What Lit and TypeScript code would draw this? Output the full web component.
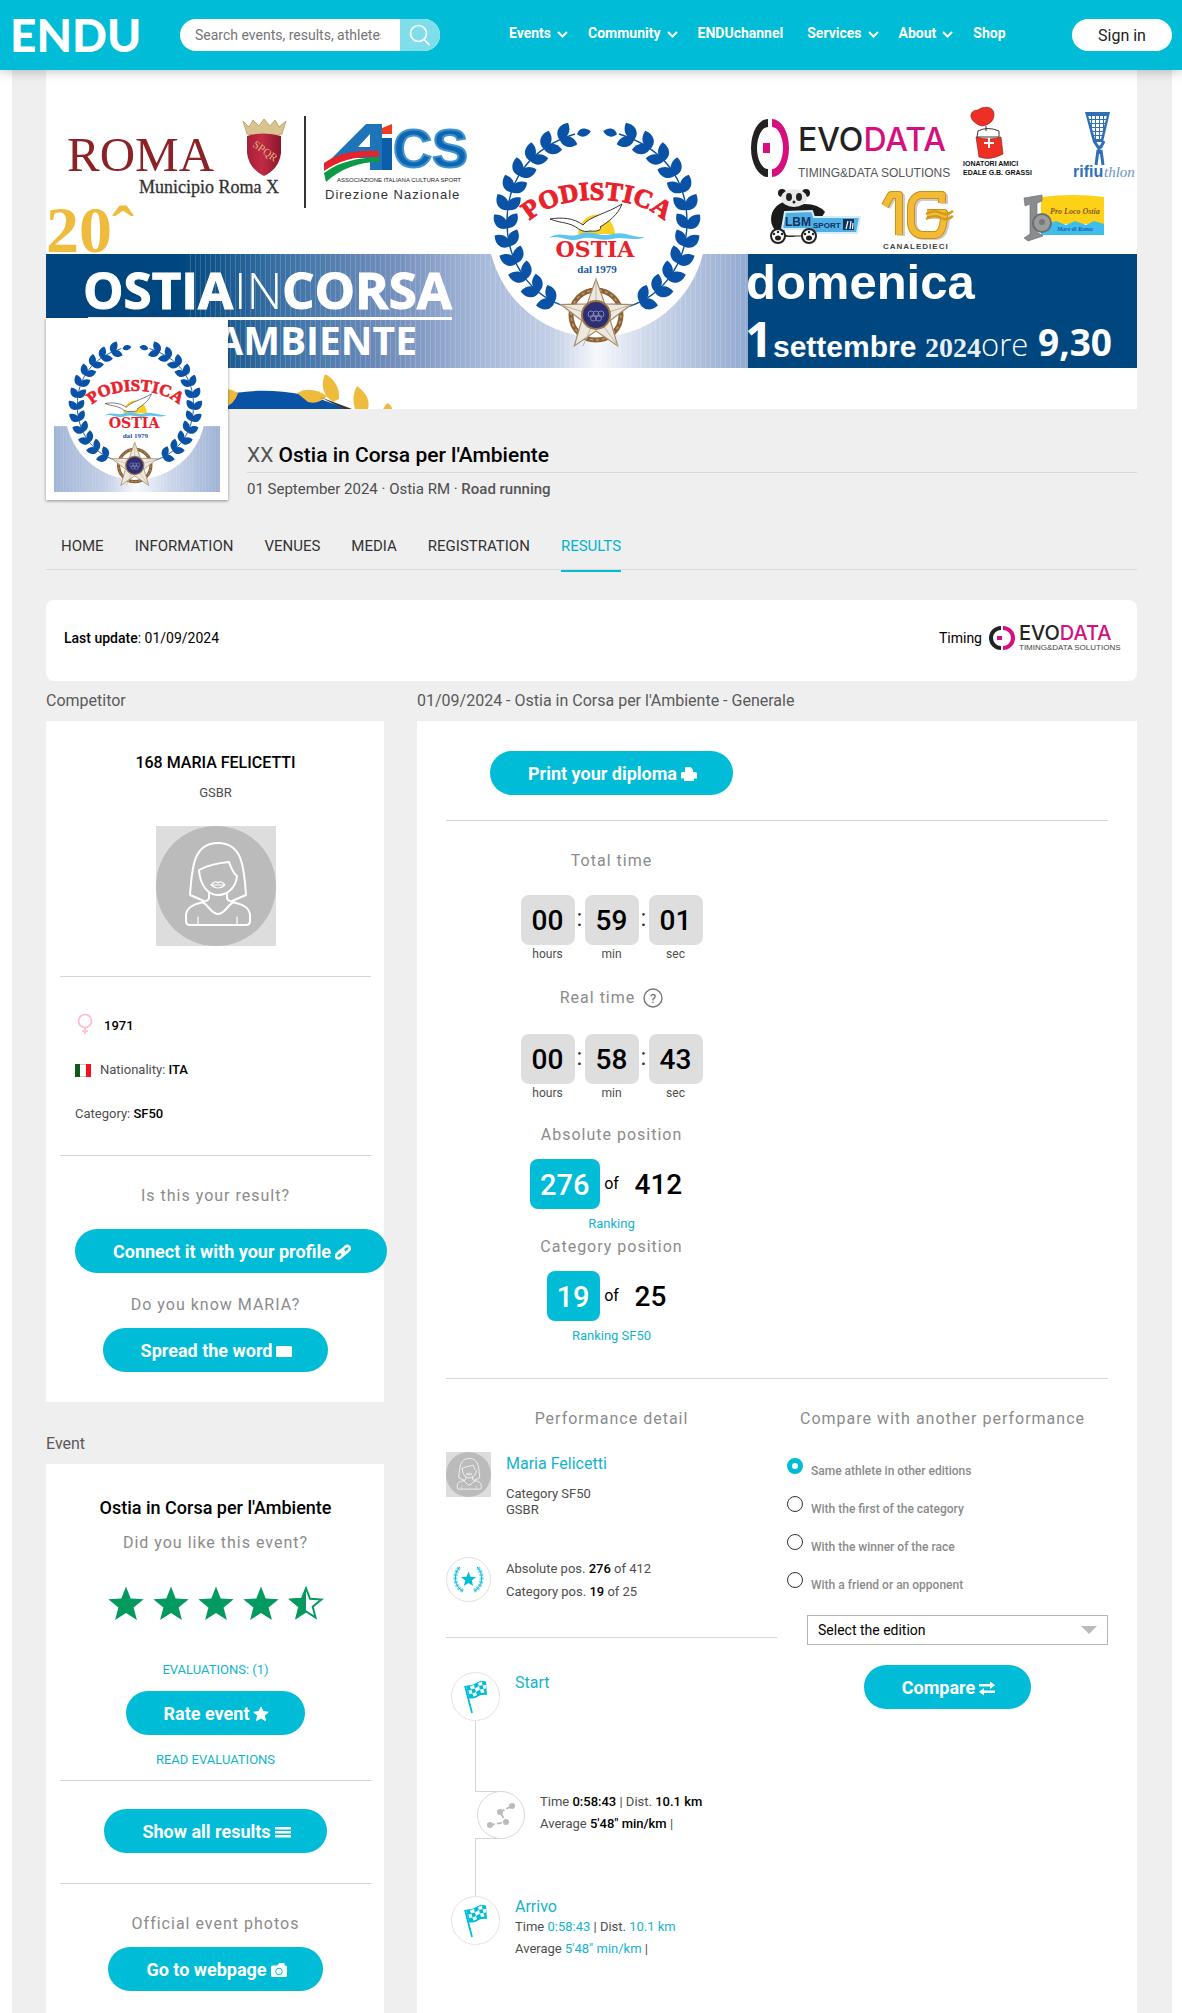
import { LitElement, html, svg, css } from "lit";
import { customElement, state } from "lit/decorators.js";

const leaf = (x: number, y: number, angle: number, len: number) => svg`
  <path transform="translate(${x.toFixed(1)} ${y.toFixed(1)}) rotate(${angle.toFixed(1)})"
    d="M0 0C${len * 0.2} ${-len * 0.42} ${len * 0.7} ${-len * 0.42} ${len} 0C${len * 0.7} ${len * 0.36} ${len * 0.25} ${len * 0.36} 0 0Z"/>`;

/* One branch of the laurel, climbing along a circle from the foot to the tip. */
const branch = (cx: number, cy: number, r: number) => {
  const parts = [];
  for (let i = 0; i < 12; i++) {
    const a = 118 + i * 11.6;
    const rad = (a * Math.PI) / 180;
    const x = cx + r * Math.cos(rad);
    const y = cy + r * Math.sin(rad);
    parts.push(leaf(x, y, a + 90 - 40, 19));
    parts.push(leaf(x, y, a + 90 + 38, 18));
  }
  const end = ((118 + 12 * 11.6) * Math.PI) / 180;
  parts.push(leaf(cx + r * Math.cos(end), cy + r * Math.sin(end), 348, 14));
  return parts;
};

const starPath = (cx: number, cy: number, outer: number, inner: number) => {
  let d = "";
  for (let i = 0; i < 10; i++) {
    const r = i % 2 ? inner : outer;
    const a = (-90 + i * 36) * (Math.PI / 180);
    d += `${i ? "L" : "M"}${(cx + r * Math.cos(a)).toFixed(1)} ${(cy + r * Math.sin(a)).toFixed(1)}`;
  }
  return d + "Z";
};

const emblem = (id: string) => svg`
  <circle cx="597" cy="228" r="109" fill="#fff"/>
  <g fill="#0a52a5">
    ${branch(597, 222, 90)}
    <g transform="translate(1194 0) scale(-1 1)">${branch(597, 222, 90)}</g>
  </g>
  <path d="M575 134C530 148 507 180 507 222C507 262 530 296 567 307M619 134C664 148 687 180 687 222C687 262 664 296 627 307" fill="none" stroke="#0a52a5" stroke-width="1.4"/>
  <path id="${id}" d="M524 228C548 190 646 190 670 228" fill="none"/>
  <text class="t-podistica"><textPath href="#${id}" startOffset="50%" text-anchor="middle">PODISTICA</textPath></text>
  <path d="M578 234C580 210 612 206 615 234Z" fill="#fbd025"/>
  <path d="M549 238C560 230 568 239 580 234C592 229 600 238 612 234C624 231 634 238 645 237C634 242 622 236 612 239C600 242 592 235 580 239C568 243 560 234 549 238Z" fill="#5ec5ee"/>
  <path d="M550 219C562 217 574 218 583 225C590 216 606 214 622 204C618 215 608 222 600 227C602 229 599 232 590 231C582 233 578 228 574 226C566 222 560 223 550 219Z" fill="#fff" stroke="#222" stroke-width=".9"/>
  <text class="t-ostia" x="595" y="257" text-anchor="middle">OSTIA</text>
  <text class="t-dal" x="597" y="273" text-anchor="middle">dal 1979</text>
  <circle cx="596" cy="315" r="25" fill="none" stroke="#8c6239" stroke-width="5"/>
  <circle cx="596" cy="315" r="25" fill="none" stroke="#c29a63" stroke-width="1.5" stroke-dasharray="3 3"/>
  <path d="${starPath(596, 316, 37, 15)}" fill="#eee9e0" stroke="#a48a6a" stroke-width="1.2"/>
  <path d="M596 279V316L583 346M596 316L618 346M596 316L561 305M596 316L631 305" stroke="#c3b49d" stroke-width="1" fill="none"/>
  <circle cx="596" cy="315" r="14" fill="#2c2f74" stroke="#9b7440" stroke-width="2"/>
  <g fill="none" stroke="#8b8cbb" stroke-width=".9"><circle cx="591" cy="314" r="3"/><circle cx="596" cy="314" r="3"/><circle cx="601" cy="314" r="3"/><circle cx="593.500" cy="318" r="3"/><circle cx="598.500" cy="318" r="3"/></g>`;

const stripes = (id: string) => svg`
  <linearGradient id="${id}-g" gradientUnits="userSpaceOnUse" x1="46" y1="0" x2="748" y2="0">
    <stop offset="0" stop-color="#00457d"/><stop offset=".19" stop-color="#00477f"/>
    <stop offset=".34" stop-color="#3c72a6"/><stop offset=".5" stop-color="#7590bd"/>
    <stop offset=".62" stop-color="#a6b8d9"/><stop offset=".72" stop-color="#c3cfe6"/>
    <stop offset=".785" stop-color="#f6f8fc"/><stop offset=".86" stop-color="#cdd7ea"/>
    <stop offset="1" stop-color="#91a9cf"/>
  </linearGradient>
  <pattern id="${id}-p" width="5" height="10" patternUnits="userSpaceOnUse"><rect width="1" height="10" fill="#fff" opacity=".16"/></pattern>`;

const female = html`<svg class="avatar" viewBox="0 0 120 120" role="img" aria-label="Athlete">
  <rect width="120" height="120" fill="#ddd"/><circle cx="60" cy="60" r="60" fill="#bbb"/>
  <g fill="none" stroke="#fff" stroke-width="2" stroke-linejoin="round" stroke-linecap="round">
    <path d="M48 75L34 69C36 40 38 17 62 17C86 17 88 40 90 69L76 75"/>
    <path d="M43 44C52 39 62 37 73 36C75 42 77 47 81 50C80 60 73 69 62 69C51 69 44 58 43 44Z"/>
    <path d="M53 67V72C53 75 48 76 44 77C36 79 30 82 30 90V95Q30 99 34 99H90Q94 99 94 95V90C94 82 88 79 80 77C76 76 71 75 71 72V67"/>
    <path d="M46 76C52 78 55 88 62 88C69 88 72 78 78 76"/>
    <path d="M42 91V98M81 91V98M55 59Q59 54 62 57Q65 54 69 59Q62 65 55 59ZM55 59H69" stroke-width="1.2"/>
  </g></svg>`;

const chevron = html`<svg class="chev" viewBox="0 0 11 7" aria-hidden="true"><path d="M1 1L5.500 5.500L10 1" fill="none" stroke="#fff" stroke-width="2"/></svg>`;

const icons = {
  printer: svg`<path d="M5 1H9.500L12 3.500V6H14.500Q16 6 16 7.500V12.500H13V15H3V12.500H0V7.500Q0 6 1.500 6H4V2Q4 1 5 1Z"/>`,
  link: svg`<g fill="none" stroke="#fff" stroke-width="2.600"><rect x="6" y="3.200" width="9.500" height="5" rx="2.500" transform="rotate(-42 11 6)"/><rect x=".5" y="8" width="9.500" height="5" rx="2.500" transform="rotate(-42 5 10.500)"/></g>`,
  mail: svg`<rect x="0" y="3" width="16" height="11" rx="1.500"/>`,
  star: svg`<path d="${starPath(8, 8.5, 7.6, 3.6)}" stroke="#fff" stroke-linejoin="round"/>`,
  menu: svg`<path d="M0 3H16V5.500H0ZM0 7H16V9.500H0ZM0 11H16V13.500H0Z"/>`,
  camera: svg`<path d="M1.500 3.500H6L8.500 1H13.500V3.500H14.500Q16 3.500 16 5V13.500Q16 15 14.500 15H1.500Q0 15 0 13.500V5Q0 3.500 1.500 3.500Z"/><circle cx="8" cy="9.500" r="3.300" fill="none" stroke="#00bcd7" stroke-width="1"/>`,
  swap: svg`<path d="M0 4H11V1.500L16 5.200L11 9V6.500H0ZM16 10.500H5V8L0 11.700L5 15.500V13H16Z"/>`,
};

const pill = (label: string, icon: keyof typeof icons) => html`<button class="pill" type="button">${label}<svg viewBox="0 0 16 16" aria-hidden="true" fill="#fff">${icons[icon]}</svg></button>`;

const flag = html`<svg viewBox="0 0 49 49" aria-hidden="true">
  <circle cx="24.500" cy="24.500" r="24" fill="#fff" stroke="#e2e2e2"/>
  <path d="M14 14L21 41" stroke="#00bcd7" stroke-width="1.800"/>
  <path d="M15 13.500Q21 14 25 11Q30 8 35 9.500L36 23Q30 22 26 25Q23 27 18 26.500Z" fill="#00bcd7"/>
  <path d="M19 14.500L23 13L24 16.500L20 17.500ZM27 11L31 10L31.500 13L28 14ZM24 16.500L28 14L29 17.500L25 20ZM31.500 13.500L35 13V16.500L32.500 17ZM20.500 18L17.500 18.500L18.500 22L21.500 21.500ZM21.500 21.500L25 20L26 23L22.500 24.800ZM29 17.500L32.500 17L33.500 20.500L30 21Z" fill="#fff"/>
</svg>`;

const laurel = html`<svg class="medal" viewBox="0 0 45 45" aria-hidden="true">
  <circle cx="22.500" cy="22.500" r="22" fill="#fff" stroke="#e0e0e0"/>
  <g fill="none" stroke="#7edbe9" stroke-width="4" stroke-dasharray="2.500 1"><path d="M17 34C8 30 7 16 14 10"/><path d="M28 34C37 30 38 16 31 10"/></g>
  <path d="M17 34C8 30 7 16 14 10M28 34C37 30 38 16 31 10" fill="none" stroke="#00bcd7" stroke-width="1"/>
  <path d="${starPath(22.5, 22.5, 8, 3.4)}" fill="#00bcd7"/>
</svg>`;

const trackIcon = html`<svg viewBox="0 0 48 48" aria-hidden="true">
  <circle cx="24" cy="24" r="23.500" fill="#fff" stroke="#dadada"/>
  <path d="M13 34L29 31L23 21L35 15" fill="none" stroke="#bbb" stroke-width="1.800" stroke-dasharray="5 2"/>
  <g fill="#bbb"><circle cx="13" cy="34" r="3"/><circle cx="29" cy="31" r="3"/><circle cx="23" cy="21" r="3"/><circle cx="35" cy="15" r="3"/></g>
</svg>`;

const scoreStar = (half: boolean) => html`<svg viewBox="0 0 36 34" aria-hidden="true">${
  half
    ? svg`<path d="${starPath(18, 18.5, 16.2, 7)}" fill="#fff" stroke="#039a5f" stroke-width="2"/><path d="M18 1V26L8 33L11 21L1 13L13.500 12Z" fill="#039a5f"/>`
    : svg`<path d="${starPath(18, 19, 18.6, 8)}" fill="#039a5f"/>`
}</svg>`;

const banner = html`<svg class="banner" viewBox="46 70 1091 339" role="img" aria-label="Ostia in Corsa per l'Ambiente">
  <defs>${stripes("bn")}
    <linearGradient id="shield" x1="0" x2="1"><stop offset="0" stop-color="#a81f38"/><stop offset=".45" stop-color="#c22a45"/><stop offset="1" stop-color="#8a1629"/></linearGradient>
    <pattern id="mesh" width="4" height="4" patternUnits="userSpaceOnUse"><rect width="3" height="3" fill="#fff"/></pattern>
  </defs>
  <rect x="46" y="70" width="1091" height="339" fill="#fff"/>
  <text x="67" y="171" class="serif" font-size="49" fill="#8c2226">ROMA</text>
  <text x="139" y="193" class="serif" font-size="18" fill="#333" stroke="#333" stroke-width=".3">Municipio Roma X</text>
  <path d="M243 121L249 127L253 120L259 126L264 119L270 126L275 120L279 127L286 121L282 134Q264 139 247 134Z" fill="#d9c48f" stroke="#b39a5d" stroke-width=".8"/>
  <path d="M247 136Q264 131 281 136V153Q279 169 264 176Q249 169 247 153Z" fill="url(#shield)"/>
  <text x="252" y="146" class="serif" font-size="11" fill="#e0b07f" transform="rotate(36 252 146)">SPQR</text>
  <rect x="304" y="116" width="2" height="92" fill="#333"/>
  <path d="M328 162L366 124H382V170H370V158H346Z" fill="#1f74b8"/>
  <path d="M358 147L370 134V147Z" fill="#fff"/>
  <text x="393" y="167" class="sans" font-weight="700" font-size="54" fill="#0f66b0" stroke="#3f93d2" stroke-width="2">CS</text>
  <path d="M382 138H392V170H382Z" fill="#0b5fa8"/><path d="M382 128L392 124V134H382Z" fill="#ee3b24"/>
  <path d="M324 163C340 152 358 150 379 151V157C358 156 340 160 324 171Z" fill="#e5232b"/>
  <path d="M324 173C340 161 358 158 379 157V162C358 162 340 169 326 182Z" fill="#0d9a47"/>
  <text x="337" y="182" class="sans" font-size="6" fill="#222">ASSOCIAZIONE ITALIANA CULTURA SPORT</text>
  <text x="325" y="199" class="sans" font-size="13" fill="#333" letter-spacing="1">Direzione Nazionale</text>
  <text x="46" y="252" class="serif" font-weight="700" font-size="66" fill="#efbb3d">20ˆ</text>

  <rect x="46" y="254" width="702" height="114" fill="url(#bn-g)"/>
  <rect x="190" y="254" width="558" height="114" fill="url(#bn-p)"/>
  <rect x="748" y="254" width="389" height="114" fill="#00477f"/>
  <text x="83" y="309" class="open" font-weight="700" font-size="51" fill="#fff" stroke="#fff">OSTIA</text>
  <text x="234" y="309" class="open" font-weight="300" font-size="50" fill="#fff">IN</text>
  <text x="282" y="309" class="open" font-weight="700" font-size="51" fill="#fff" stroke="#fff">CORSA</text>
  <rect x="88" y="317" width="364" height="3" fill="#fff"/>
  <text x="417" y="355" text-anchor="end" class="open" font-weight="700" font-size="39" fill="#fff">AMBIENTE</text>
  <path d="M220 409V396C250 388 300 387 345 409Z" fill="#0a52a5"/>
  <g fill="#efbb3d"><path d="M210 396Q225 384 238 393Q235 404 222 409Z"/><path d="M297 393Q310 385 327 396Q318 405 308 402Z"/><path d="M325 374Q340 382 339 399L333 402Q318 392 325 374Z"/><path d="M357 386Q371 396 368 409H355Q351 396 357 386Z"/><path d="M387 403Q392 405 392 409H383Z"/></g>
  <path d="M320 397L352 409H344Z" fill="#333"/>
  ${emblem("arc-banner")}

  <path d="M768 119A17 29 0 0 0 768 177V169A11 21 0 0 1 768 127Z" fill="#222"/>
  <path d="M772 119A17 29 0 0 1 772 177V169A11 21 0 0 0 772 127Z" fill="#d5107e"/>
  <rect x="763" y="143" width="7" height="10" fill="#d5107e"/>
  <text x="798" y="151" class="inter" font-size="32" fill="#222">EVO<tspan fill="#d5107e">DATA</tspan></text>
  <text x="798" y="177" class="sans" font-size="12" fill="#555">TIMING&amp;DATA SOLUTIONS</text>

  <path d="M982 126C968 122 968 110 978 110C981 107 994 104 994 115C994 120 990 125 982 126Z" fill="#ee2f24" stroke="#7d1410" stroke-width=".6"/>
  <path d="M986 126V131M978 131Q988 126 999 131V137H977Z" fill="#fff" stroke="#222" stroke-width=".9"/>
  <path d="M976 137Q989 141 1001 137L1003 154Q990 161 979 157Z" fill="#ee2f24" stroke="#7d1410" stroke-width=".6"/>
  <path d="M989 138V148M984 143H994" stroke="#fff" stroke-width="2"/>
  <text x="963" y="166" class="sans" font-weight="700" font-size="7" fill="#111">IONATORI AMICI</text>
  <text x="963" y="175" class="sans" font-weight="700" font-size="7" fill="#111">EDALE G.B. GRASSI</text>
  <path d="M1085 112H1110L1103 142H1093Z" fill="#2f6fb7"/><path d="M1088 115H1107L1101 139H1095Z" fill="url(#mesh)"/>
  <path d="M1094 141L1098 147H1101L1104 141M1099 146V154M1098 150L1096 165M1101 150L1103 165" stroke="#2f6fb7" stroke-width="3" fill="none"/>
  <text x="1073" y="177" class="sans" font-weight="700" font-size="16" fill="#2f6fb7">rifiu</text>
  <text x="1104" y="177" class="serif" font-style="italic" font-size="15" fill="#6a93c8">thlon</text>

  <ellipse cx="790" cy="219" rx="19" ry="18" fill="#1b1b1b"/><path d="M790 206Q815 200 825 212L820 220H795Z" fill="#1b1b1b"/>
  <circle cx="782" cy="193" r="4" fill="#1b1b1b"/><circle cx="806" cy="193" r="4" fill="#1b1b1b"/>
  <ellipse cx="794" cy="198" rx="13" ry="9" fill="#e9e9e9"/><ellipse cx="789" cy="197" rx="3" ry="4" fill="#222"/><ellipse cx="799" cy="197" rx="3" ry="4" fill="#222"/><circle cx="794" cy="202" r="1.500" fill="#222"/>
  <rect x="784" y="226" width="30" height="10" rx="4" fill="#fff" stroke="#222"/>
  <path d="M785 212L812 211L814 217H860L857 233H812L810 229H782Z" fill="#4fb0e6" stroke="#d6ecf8" stroke-width="2"/>
  <text x="785" y="226" class="sans" font-weight="700" font-size="12" fill="#12305c">LBM</text>
  <text x="813" y="228" class="sans" font-weight="700" font-size="8" fill="#12305c">SPORT</text><rect x="843" y="219" width="11" height="11" fill="#12305c"/><path d="M846 229L848 221M850 229L851 221M852.500 229L853 223" stroke="#fff" stroke-width="1.200"/>
  <g fill="#fff" stroke="#222" stroke-width="2"><circle cx="778" cy="236" r="7"/><circle cx="809" cy="236" r="7"/></g>
  <g fill="#222"><ellipse cx="778" cy="238" rx="3" ry="2.500"/><ellipse cx="809" cy="238" rx="3" ry="2.500"/><circle cx="774" cy="234" r="1.200"/><circle cx="778" cy="232" r="1.200"/><circle cx="782" cy="234" r="1.200"/><circle cx="805" cy="234" r="1.200"/><circle cx="809" cy="232" r="1.200"/><circle cx="813" cy="234" r="1.200"/></g>
  <g fill="none" stroke="#ccc" stroke-width="8" stroke-linejoin="round"><path d="M887 207L892 197H901V236"/><path d="M944 204V197H921Q913 200 913 210V225Q915 236 925 236H936Q946 236 946 215H929"/></g>
  <g fill="none" stroke="#c98f18" stroke-width="8" stroke-linejoin="round"><path d="M885 206L891 195H899V235"/><path d="M942 203V195H920Q911 198 911 208V224Q913 235 923 235H934Q944 235 944 213H927"/></g>
  <g fill="none" stroke="#f3bb33" stroke-width="6" stroke-linejoin="round"><path d="M885 206L891 195H899V235"/><path d="M942 203V195H920Q911 198 911 208V224Q913 235 923 235H934Q944 235 944 213H927"/></g>
  <path d="M926 214Q934 209 941 213Q947 216 953 211M926 219Q934 214 941 218Q947 221 953 216" stroke="#d69a1c" stroke-width="2.500" fill="none"/>
  <text x="883" y="249" class="sans" font-weight="700" font-size="8" fill="#444" letter-spacing="1">CANALEDIECI</text>
  <path d="M1041 197Q1075 193 1104 197V224H1041Z" fill="#fcd116"/><path d="M1041 226L1056 221L1066 225L1075 221L1086 225L1094 221L1104 224V235H1041Z" fill="#41bdec"/>
  <path d="M1024 198L1042 195V201L1037 203V232L1043 236L1028 241L1024 238L1030 234V204L1025 206Z" fill="#8a8d90" stroke="#666" stroke-width=".6"/>
  <circle cx="1042" cy="223" r="9" fill="#9a9c9e" stroke="#6b6d70" stroke-width="2"/><circle cx="1042" cy="222" r="3" fill="#777"/>
  <text x="1050" y="214" class="serif" font-style="italic" font-weight="700" font-size="8" fill="#8a5a2c">Pro Loco Ostia</text>
  <text x="1057" y="231" class="serif" font-style="italic" font-weight="700" font-size="6" fill="#1b5fa4">Mare di Roma</text>

  <text x="746" y="299" class="sans" font-weight="700" font-size="49" fill="#fff">domenica</text>
  <text x="745" y="357" class="open" font-weight="700" font-size="48" fill="#fff">1</text>
  <text x="773" y="357" class="sans" font-weight="700" font-size="30" fill="#fff">settembre</text>
  <text x="925" y="357" class="serif" font-weight="700" font-size="28" fill="#e7eef6">2024</text>
  <text x="981" y="356" class="open" font-weight="300" font-size="31" fill="#fff">ore</text>
  <text x="1038" y="356" class="open" font-weight="700" font-size="37" fill="#fff">9,30</text>
</svg>`;

const evodata = html`<svg class="evodata" viewBox="0 0 132 26" role="img" aria-label="Evodata">
  <path d="M12 1A12 12 0 0 0 12 25V21A8 8 0 0 1 12 5Z" fill="#222"/><path d="M14 1A12 12 0 0 1 14 25V21A8 8 0 0 0 14 5Z" fill="#d5107e"/><rect x="8" y="11" width="5" height="4" fill="#d5107e"/>
  <text x="30" y="15" class="inter" font-size="20" fill="#222">EVO<tspan fill="#d5107e">DATA</tspan></text>
  <text x="30" y="25" class="sans" font-size="8" fill="#444">TIMING&amp;DATA SOLUTIONS</text>
</svg>`;

@customElement("app-root")
export class AppRoot extends LitElement {
  @state() private mode = 0;

  private nav = [
    { label: "Events", menu: true },
    { label: "Community", menu: true },
    { label: "ENDUchannel", menu: false },
    { label: "Services", menu: true },
    { label: "About", menu: true },
    { label: "Shop", menu: false },
  ];
  private tabs = ["HOME", "INFORMATION", "VENUES", "MEDIA", "REGISTRATION", "RESULTS"];
  private modes = [
    "Same athlete in other editions",
    "With the first of the category",
    "With the winner of the race",
    "With a friend or an opponent",
  ];

  static styles = css`
    :host { display: block; background: #fff; color: #4d4d4d; font: 13px/20px Roboto, "Liberation Sans", sans-serif; }
    * { box-sizing: border-box; }
    h1, h2, h3, p, ul, dl, dd, fieldset { margin: 0; padding: 0; border: 0; list-style: none; font-weight: 400; }
    a { color: inherit; text-decoration: none; }
    b { font-weight: 500; color: #000; }
    button, input, select { font-family: inherit; }
    svg { display: block; }
    .serif { font-family: "Liberation Serif", serif; }
    .sans { font-family: "Liberation Sans", sans-serif; }
    .open { font-family: "Open Sans", sans-serif; }
    .inter { font-family: Inter, sans-serif; font-weight: 500; }
    .t-podistica { font: 700 26px "Liberation Serif", serif; fill: #e8212b; stroke: #e8212b; stroke-width: 1px; }
    .t-ostia { font: 700 22px "DejaVu Serif", serif; fill: #e8212b; }
    .t-dal { font: 700 11px "Liberation Serif", serif; fill: #1b56a5; }

    .top { position: relative; z-index: 1; display: flex; align-items: center; height: 70px; padding: 0 10px 0 10px; background: #00bcd7; box-shadow: 0 0 12px rgba(0, 0, 0, 0.3); }
    .logo { width: 126px; font: 900 46px/46px Lato, sans-serif; color: #fff; }
    .search { display: flex; width: 260px; height: 32px; margin-left: 44px; border-radius: 16px; overflow: hidden; background: #fff; }
    .search input { flex: 1; min-width: 0; padding: 0 19px 0 15px; border: 0; background: none; font-size: 14px; color: #333; outline: 0; }
    .search input::placeholder { color: #757575; opacity: 1; }
    .search button { width: 40px; padding: 0 0 0 9px; border: 0; background: #80deeb; }
    .search svg { width: 22px; }
    .nav { display: flex; gap: 20px; margin: 0 auto 0 69px; font: 700 14px/20px Roboto, sans-serif; color: #fff; padding-bottom: 4px; }
    .nav a { display: flex; align-items: center; gap: 6px; }
    .nav .plain { padding-right: 4px; }
    .chev { width: 11px; margin-top: 3px; }
    .signin { width: 100px; height: 32px; border: 0; border-radius: 16px; background: #fff; font-size: 16px; color: #222; }

    .page { margin: 0 10px 0 12px; padding: 0 35px 0 34px; background: #efefef; }
    .banner { width: 100%; height: auto; }
    .head { display: flex; gap: 19px; }
    .thumb { position: relative; flex: none; width: 182px; height: 182px; margin-top: -91px; padding: 8px; background: #fff; box-shadow: 0 1px 3px rgba(0, 0, 0, 0.4); }
    .thumb svg { width: 100%; height: 100%; }
    .title { flex: 1; padding-top: 34px; }
    .title h1 { padding-bottom: 5px; border-bottom: 1px solid #d8d8d8; font-size: 21px; font-weight: 500; line-height: 24px; color: #000; }
    .title h1 span { font-weight: 400; }
    .title h1 span, .title b { color: #555; }
    .title p { padding-top: 6px; font-size: 15px; line-height: 20px; }
    .tabs { display: flex; gap: 31px; margin-top: 31px; padding: 0 15px; border-bottom: 1px solid #dadada; font-size: 15px; line-height: 30px; color: #333; }
    .tabs a { padding-bottom: 9px; margin-bottom: -3px; border-bottom: 2px solid transparent; }
    .tabs .on { color: #00b4d0; border-color: #00bcd7; }
    .update { display: flex; justify-content: space-between; margin-top: 30px; height: 81px; padding: 24px 16px 24px 18px; border-radius: 8px; background: #fff; font-size: 14px; line-height: 28px; color: #000; }
    .timing { display: flex; gap: 7px; height: 28px; align-items: center; }
    .evodata { width: 132px; overflow: visible; }

    .cols { display: grid; grid-template-columns: minmax(0, 338fr) minmax(0, 720fr); column-gap: 33px; padding-top: 8px; }
    .col { display: flex; flex-direction: column; }
    .cap { margin-bottom: 8px; font-size: 16px; line-height: 24px; color: #5a5a5a; }
    .cap2 { margin-top: 30px; }
    .card { background: #fff; }
    .side { padding: 30px 13px 30px 14px; text-align: center; }
    .side.last { padding: 32px 13px 22px 14px; flex: 1; }
    .act { padding: 0 15px; text-align: center; white-space: nowrap; }
    .pill { display: inline-flex; align-items: center; gap: 4px; height: 44px; padding: 0 36px 0 38px; border: 0; border-radius: 22px; background: #00bcd7; color: #fff; font-size: 18px; font-weight: 700; vertical-align: top; white-space: nowrap; }
    .pill svg { flex: none; width: 16px; height: 16px; margin-top: 2px; }
    .line { height: 1px; border: 0; margin: 0; background: #d6d6d6; }
    .name { font-size: 16px; font-weight: 500; line-height: 24px; color: #000; }
    .ev { font-size: 18px; font-weight: 500; line-height: 24px; color: #000; }
    .club { margin: 8px 0 23px; }
    .avatar { width: 120px; }
    .side .avatar { margin: 0 auto 30px; }
    .facts { padding: 27px 15px 19px; text-align: left; }
    .facts li { display: flex; align-items: center; height: 44px; white-space: pre; }
    .facts .sex { width: 16px; margin: 0 11px 5px 2px; }
    .facts .ita { width: 16px; margin-right: 9px; }
    .q { font-size: 16px; line-height: 24px; letter-spacing: 1px; color: #8b8b8b; text-align: center; }
    .mt1 { margin-top: 1px; } .mt5 { margin-top: 5px; } .mt11 { margin-top: 11px; } .mt20 { margin-top: 20px; } .mt21 { margin-top: 21px; } .mt22 { margin-top: 22px; } .mt24 { margin-top: 24px; } .mt28 { margin-top: 28px; } .mt30 { margin-top: 30px; }
    .stars { display: flex; justify-content: center; gap: 9px; margin: 31px 0 40px; }
    .stars svg { width: 36px; }
    .blue { color: #12b3cd; }
    .read { margin: 15px 0 10px; }

    .main { flex: 1; padding: 30px 29px; }
    .half { width: 50%; text-align: center; }
    .print { margin-bottom: 25px; }
    .clock { display: flex; justify-content: center; text-align: center; font-size: 12px; line-height: 16px; }
    .unit { width: 54px; }
    .num { display: block; height: 50px; margin-bottom: 1px; border-radius: 8px; background: #dedede; color: #000; font-size: 28px; font-weight: 500; line-height: 52px; }
    .sep { width: 10px; text-align: center; font-size: 24px; line-height: 46px; color: #333; }
    .real { display: flex; justify-content: center; align-items: center; gap: 8px; }
    .real svg { width: 20px; }
    .rank { display: grid; grid-template-columns: 1fr 24px 1fr; align-items: center; height: 50px; margin-top: 12px; font-size: 16px; color: #000; }
    .rank b { justify-self: end; height: 50px; padding: 0 10px; border-radius: 8px; background: #00bcd7; color: #fff; font-size: 29px; line-height: 52px; }
    .rank span { justify-self: start; height: 50px; padding-left: 11px; font-size: 28px; font-weight: 500; line-height: 52px; }
    .mainline { margin-top: 32px; }
    .split { display: grid; grid-template-columns: 1fr 1fr; padding-top: 28px; }
    .row { display: flex; gap: 15px; }
    .ath { margin-top: 21px; }
    .ath .avatar, .medal { flex: none; width: 45px; height: 45px; }
    .ath h3 { padding: 2px 0 12px; font-size: 16px; line-height: 20px; }
    .ath p { line-height: 16px; }
    .pos { margin: 39px 0 34px; line-height: 23px; }
    .tl { padding: 34px 0 0 5px; }
    .tl h3 { font-size: 16px; line-height: 22px; }
    .stop { display: flex; align-items: flex-start; gap: 15px; line-height: 22px; }
    .stop svg { flex: none; width: 49px; height: 49px; }
    .rail { height: 70px; margin-left: 24px; border-left: 1px solid #d5d5d5; }
    .rail.low { height: 57px; }
    .leg { display: flex; margin-left: 24px; line-height: 22px; }
    .spur { width: 30px; height: 48px; margin-right: -28px; border: solid #d5d5d5; border-width: 1px 0; }
    .leg svg { width: 48px; margin-right: 15px; }
    .arr h3 { line-height: 20px; padding-top: 1px; }
    .arr p { line-height: 24px; }
    .arr p:first-of-type { line-height: 20px; }
    .opts { padding: 27px 0 0 10px; }
    .opt { display: flex; gap: 8px; height: 38px; }
    .opt input { appearance: none; width: 16px; height: 16px; margin: 0; border: 1px solid #333; border-radius: 50%; background: #fff; }
    .opt input:checked { border: 5px solid #00bcd7; }
    .opt label { padding-top: 5px; font-size: 12px; font-weight: 500; line-height: 16px; color: #8b8b8b; }
    .pick { position: relative; margin: 5px 0 20px 30px; }
    .pick select { width: 100%; height: 30px; padding: 0 10px; appearance: none; border: 1px solid #b5b5b5; border-radius: 0; background: #fff; font-size: 14px; color: #000; display: block; }
    .pick::after { content: ""; position: absolute; right: 11px; top: 11px; border: 8px solid transparent; border-top: 8px solid #bbb; border-bottom: 0; pointer-events: none; }
    .cmp { padding-left: 10px; text-align: center; }
  `;

  private clock(values: string[]) {
    const names = ["hours", "min", "sec"];
    return html`<div class="clock">${values.map(
      (v, i) => html`${i ? html`<span class="sep" aria-hidden="true">:</span>` : ""}<div class="unit"><span class="num">${v}</span>${names[i]}</div>`
    )}</div>`;
  }

  render() {
    return html`
      <header class="top">
        <a class="logo" href="#">ENDU</a>
        <form class="search" role="search">
          <input type="text" aria-label="Search" placeholder="Search events, results, athletes" />
          <button type="button" aria-label="Search"><svg viewBox="0 0 22 22" fill="none" stroke="#fff" stroke-width="1.700"><circle cx="9.500" cy="9.500" r="8"/><path d="M15 15.500L20.500 21"/></svg></button>
        </form>
        <nav class="nav">${this.nav.map((n) => html`<a href="#" class=${n.menu ? "menu" : "plain"}>${n.label}${n.menu ? chevron : ""}</a>`)}</nav>
        <button class="signin" type="button">Sign in</button>
      </header>
      <main class="page">
        ${banner}
        <div class="head">
          <div class="thumb"><svg viewBox="471 99 257 257" role="img" aria-label="Podistica Ostia">
            <defs>${stripes("th")}</defs>
            <rect x="471" y="254" width="257" height="102" fill="url(#th-g)"/><rect x="471" y="254" width="257" height="102" fill="url(#th-p)"/>
            ${emblem("arc-thumb")}</svg></div>
          <div class="title">
            <h1><span>XX</span> Ostia in Corsa per l'Ambiente</h1>
            <p>01 September 2024 · Ostia RM · <b>Road running</b></p>
          </div>
        </div>
        <nav class="tabs">${this.tabs.map((t) => html`<a href="#" class=${t === "RESULTS" ? "on" : ""}>${t}</a>`)}</nav>
        <section class="update">
          <p><b>Last update</b>: 01/09/2024</p>
          <div class="timing">Timing ${evodata}</div>
        </section>
        <div class="cols">
          <div class="col">
            <h2 class="cap">Competitor</h2>
            <section class="card side">
              <h3 class="name">168 MARIA FELICETTI</h3>
              <p class="club">GSBR</p>
              ${female}
              <hr class="line" />
              <ul class="facts">
                <li><svg class="sex" viewBox="0 0 16 22" fill="none" stroke="#ffb9c8" stroke-width="1.600" aria-label="Female"><circle cx="8" cy="8" r="6.500"/><path d="M8 14.500V21M5 18H11"/></svg><b>1971</b></li>
                <li><svg class="ita" viewBox="0 0 16 13" aria-hidden="true"><rect width="16" height="13" fill="#ccc"/><rect x="5" y="1" width="6" height="11" fill="#fff"/><rect y="0" width="5" height="13" fill="#0b5a1c"/><rect x="11" width="5" height="13" fill="#f5101c"/></svg>Nationality: <b>ITA</b></li>
                <li>Category: <b>SF50</b></li>
              </ul>
              <hr class="line" />
              <p class="q mt28">Is this your result?</p>
              <div class="act mt21">${pill("Connect it with your profile", "link")}</div>
              <p class="q mt20">Do you know MARIA?</p>
              <div class="act mt11">${pill("Spread the word", "mail")}</div>
            </section>
            <h2 class="cap cap2">Event</h2>
            <section class="card side last">
              <h3 class="ev">Ostia in Corsa per l'Ambiente</h3>
              <p class="q mt11">Did you like this event?</p>
              <div class="stars" role="img" aria-label="4.5 of 5">${[0, 1, 2, 3, 4].map((i) => scoreStar(i === 4))}</div>
              <a class="blue" href="#">EVALUATIONS: (1)</a>
              <div class="act mt11">${pill("Rate event", "star")}</div>
              <p class="read"><a class="blue" href="#">READ EVALUATIONS</a></p>
              <hr class="line" />
              <div class="act mt28">${pill("Show all results", "menu")}</div>
              <hr class="line mt30" />
              <p class="q mt28">Official event photos</p>
              <div class="act mt11">${pill("Go to webpage", "camera")}</div>
            </section>
          </div>
          <div class="col">
            <h2 class="cap">01/09/2024 - Ostia in Corsa per l'Ambiente - Generale</h2>
            <section class="card main">
              <div class="half print">${pill("Print your diploma", "printer")}</div>
              <hr class="line" />
              <div class="half">
                <h3 class="q mt28">Total time</h3>
                <div class="mt22">${this.clock(["00", "59", "01"])}</div>
                <h3 class="q real mt24">Real time
                  <svg viewBox="0 0 20 20" aria-label="Help"><circle cx="10" cy="10" r="9" fill="none" stroke="#777" stroke-width="1.400"/><text x="10" y="15" text-anchor="middle" font-size="13" letter-spacing="0" fill="#666">?</text></svg></h3>
                <div class="mt24">${this.clock(["00", "58", "43"])}</div>
                <h3 class="q mt22">Absolute position</h3>
                <div class="rank"><b>276</b>of<span>412</span></div>
                <p class="mt5"><a class="blue" href="#">Ranking</a></p>
                <h3 class="q mt1">Category position</h3>
                <div class="rank"><b>19</b>of<span>25</span></div>
                <p class="mt5"><a class="blue" href="#">Ranking SF50</a></p>
              </div>
              <hr class="line mainline" />
              <div class="split">
                <div>
                  <h3 class="q">Performance detail</h3>
                  <div class="row ath">${female}<div><h3 class="blue">Maria Felicetti</h3><p>Category SF50</p><p>GSBR</p></div></div>
                  <div class="row pos">${laurel}<div><p>Absolute pos. <b>276</b> of 412</p><p>Category pos. <b>19</b> of 25</p></div></div>
                  <hr class="line" />
                  <div class="tl">
                    <div class="stop">${flag}<h3 class="blue">Start</h3></div>
                    <div class="rail"></div>
                    <div class="leg"><span class="spur"></span>${trackIcon}<div><p>Time <b>0:58:43</b> | Dist. <b>10.1 km</b></p><p>Average <b>5'48" min/km</b> |</p></div></div>
                    <div class="rail low"></div>
                    <div class="stop arr">${flag}<div><h3 class="blue">Arrivo</h3><p>Time <span class="blue">0:58:43</span> | Dist. <span class="blue">10.1 km</span></p><p>Average <span class="blue">5'48" min/km</span> |</p></div></div>
                  </div>
                </div>
                <div>
                  <h3 class="q">Compare with another performance</h3>
                  <fieldset class="opts" aria-label="Compare with another performance">${this.modes.map(
                    (m, i) => html`<div class="opt"><input type="radio" name="mode" id="mode${i}" .checked=${this.mode === i} @change=${() => (this.mode = i)} /><label for="mode${i}">${m}</label></div>`
                  )}</fieldset>
                  <div class="pick"><select aria-label="Select the edition"><option>Select the edition</option></select></div>
                  <div class="cmp">${pill("Compare", "swap")}</div>
                </div>
              </div>
            </section>
          </div>
        </div>
      </main>
    `;
  }
}
